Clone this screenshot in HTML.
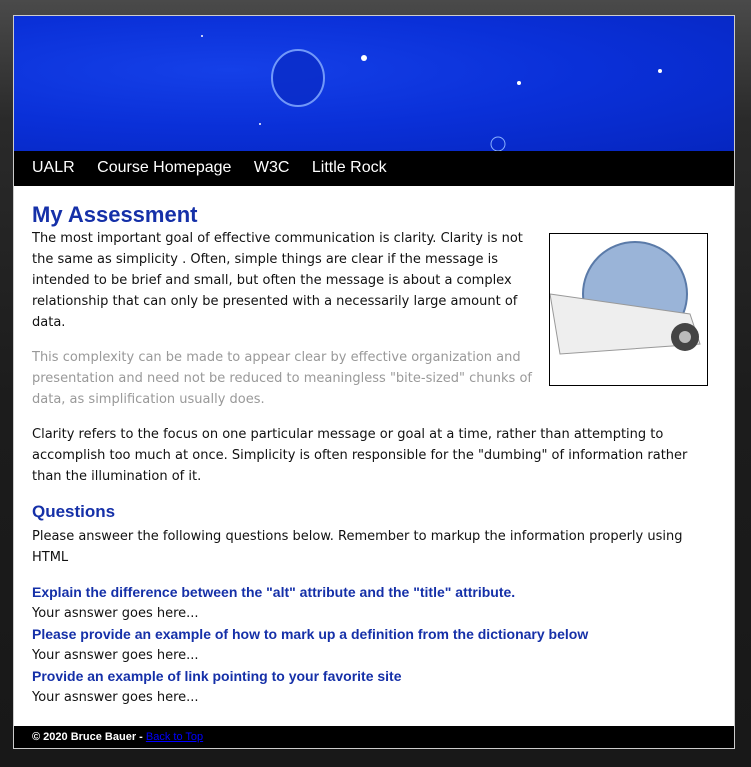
<!DOCTYPE html>
<html><head><style>
body{margin:0;width:751px;height:767px;background:linear-gradient(#4a4a4a 0,#2a2a2a 120px,#1c1c1c 400px,#181818 100%);font-family:"DejaVu Sans","Liberation Sans",sans-serif;overflow:hidden;position:relative}
#wrap{position:absolute;left:13px;top:15px;width:720px;height:732px;border:1px solid #ccc;background:#fff}
#hdr{height:135px;background:radial-gradient(ellipse at 30% 40%,#1540e8 0,#0a30d8 50%,#0626c0 100%);position:relative;overflow:hidden}
#nav{height:35px;background:#000;color:#fff;font-size:16px;line-height:33px;padding-left:18px;font-family:"Liberation Sans",sans-serif}
#nav span{margin-right:18px}
#main{padding:0 18px;font-size:13px;line-height:21px;color:#111;position:relative}
h1{color:#1530a8;font-size:22px;margin:0;padding-top:16px;line-height:26px;font-weight:bold;font-family:"Liberation Sans",sans-serif}
h2{color:#1530a8;font-size:17px;margin:11px 0 3px;line-height:22px;font-family:"Liberation Sans",sans-serif}
p{margin:0 0 14px}
.q{color:#1530a8;font-weight:bold;font-size:14px;margin:0;font-family:"Liberation Sans",sans-serif}
.a{margin:0}
#img{position:absolute;right:26px;top:47px;width:157px;height:151px;border:1px solid #000;background:#fff}
#ft{position:absolute;left:0;bottom:0;width:720px;height:22px;background:#000;color:#fff;font-size:11px;font-weight:bold;line-height:22px;font-family:"Liberation Sans",sans-serif}
#ft span{margin-left:18px}
#ft a{color:#00f;font-weight:normal;text-decoration:underline}
</style></head><body>
<div id="wrap">
<div id="hdr">
<svg width="720" height="135" style="position:absolute;left:0;top:0">
<ellipse cx="284" cy="62" rx="26" ry="28" fill="#0a2cc8" stroke="#8ab0ff" stroke-width="2" opacity=".8"/>
<circle cx="350" cy="42" r="3" fill="#fff"/><circle cx="505" cy="67" r="2" fill="#fff"/><circle cx="646" cy="55" r="2" fill="#fff"/>
<circle cx="484" cy="128" r="7" fill="none" stroke="#8ab0ff"/>
<circle cx="188" cy="20" r="1" fill="#fff"/><circle cx="246" cy="108" r="1" fill="#fff"/>
</svg></div>
<div id="nav"><span>UALR</span> <span>Course Homepage</span> <span>W3C</span> <span>Little Rock</span></div>
<div id="main">
<h1>My Assessment</h1>
<div id="img"><svg width="157" height="151"><circle cx="85" cy="60" r="52" fill="#9ab4d8"/><circle cx="85" cy="60" r="52" fill="none" stroke="#5a7aa8" stroke-width="2"/><path d="M0 60 L140 80 L150 110 L10 120 Z" fill="#eee" stroke="#999"/><circle cx="135" cy="103" r="14" fill="#444"/><circle cx="135" cy="103" r="6" fill="#bbb"/></svg></div>
<p style="width:500px">The most important goal of effective communication is clarity. Clarity is not the same as simplicity . Often, simple things are clear if the message is intended to be brief and small, but often the message is about a complex relationship that can only be presented with a necessarily large amount of data.</p>
<p style="width:500px;color:#999">This complexity can be made to appear clear by effective organization and presentation and need not be reduced to meaningless "bite-sized" chunks of data, as simplification usually does.</p>
<p>Clarity refers to the focus on one particular message or goal at a time, rather than attempting to accomplish too much at once. Simplicity is often responsible for the "dumbing" of information rather than the illumination of it.</p>
<h2>Questions</h2>
<p>Please answeer the following questions below. Remember to markup the information properly using HTML</p>
<p class="q">Explain the difference between the "alt" attribute and the "title" attribute.</p>
<p class="a">Your asnswer goes here...</p>
<p class="q">Please provide an example of how to mark up a definition from the dictionary below</p>
<p class="a">Your asnswer goes here...</p>
<p class="q">Provide an example of link pointing to your favorite site</p>
<p class="a">Your asnswer goes here...</p>
</div>
<div id="ft"><span>© 2020 Bruce Bauer - <a>Back to Top</a></span></div>
</div>
</body></html>
